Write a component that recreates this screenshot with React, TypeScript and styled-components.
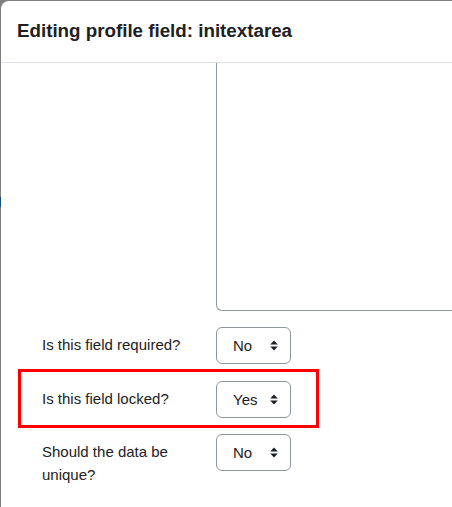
import React from "react";
import styled, { createGlobalStyle } from "styled-components";

const Global = createGlobalStyle`
  html, body { margin: 0; padding: 0; }
  body {
    background: #808080;
    font-family: "Liberation Sans", Arial, sans-serif;
    color: #1d2125;
    overflow: hidden;
  }
`;

const Page = styled.div`
  position: relative;
  width: 452px;
  height: 507px;
  display: flex;
  padding: 1px 0 0 1px;
  box-sizing: border-box;
`;

const BackdropMark = styled.div`
  position: absolute;
  left: 0;
  top: 197px;
  width: 1px;
  height: 10px;
  background: #0f4c81;
`;

const Modal = styled.div`
  flex: 1;
  background: #fff;
  border-top-left-radius: 8px;
  display: flex;
  flex-direction: column;
  overflow: hidden;
`;

const Header = styled.div`
  height: 61px;
  border-bottom: 1px solid #dee2e6;
  display: flex;
  align-items: center;
  padding-left: 16px;
  flex-shrink: 0;
`;

const Title = styled.h5`
  margin: 0;
  font-size: 18.75px;
  font-weight: 700;
  line-height: 1.2;
  color: #1d2125;
`;

const Body = styled.div`
  flex: 1;
  display: flex;
  flex-direction: column;
`;

const TextAreaBox = styled.div`
  margin-left: 215px;
  height: 247px;
  border: 1px solid #8f959e;
  border-top: none;
  border-right: none;
  border-bottom-left-radius: 6px;
  margin-bottom: 16px;
`;

const Row = styled.div<{ $highlight?: boolean }>`
  position: relative;
  display: grid;
  grid-template-columns: 150px auto;
  column-gap: 24px;
  align-items: start;
  padding-left: 41px;
  margin-bottom: 16.5px;
  &::after {
    content: "";
    display: ${(p) => (p.$highlight ? "block" : "none")};
    position: absolute;
    left: 17px;
    top: -12px;
    width: 301px;
    height: 59px;
    border: 3px solid #ff0000;
    box-sizing: border-box;
    pointer-events: none;
  }
`;

const Label = styled.label`
  font-size: 15px;
  line-height: 22.5px;
  padding-top: 7px;
  color: #1d2125;
`;

const Select = styled.div`
  width: 75px;
  height: 37px;
  box-sizing: border-box;
  border: 1px solid #8f959e;
  border-radius: 6px;
  display: flex;
  align-items: center;
  justify-content: space-between;
  padding: 0 12px 0 16px;
  font-size: 15px;
  color: #1d2125;
`;

const Arrows = () => (
  <svg width="8" height="11" viewBox="0 0 8 11">
    <path d="M4 0.5 L7.8 4.5 H0.2 Z" fill="#1d2125" />
    <path d="M4 10.5 L7.8 6.5 H0.2 Z" fill="#1d2125" />
  </svg>
);

const Field = ({ label, value, highlight }: { label: string; value: string; highlight?: boolean }) => (
  <Row $highlight={highlight}>
    <Label>{label}</Label>
    <Select>
      <span>{value}</span>
      <Arrows />
    </Select>
  </Row>
);

export default function App() {
  return (
    <>
      <Global />
      <Page>
        <BackdropMark />
        <Modal>
          <Header>
            <Title>Editing profile field: initextarea</Title>
          </Header>
          <Body>
            <TextAreaBox />
            <Field label="Is this field required?" value="No" />
            <Field label="Is this field locked?" value="Yes" highlight />
            <Field label="Should the data be unique?" value="No" />
          </Body>
        </Modal>
      </Page>
    </>
  );
}
